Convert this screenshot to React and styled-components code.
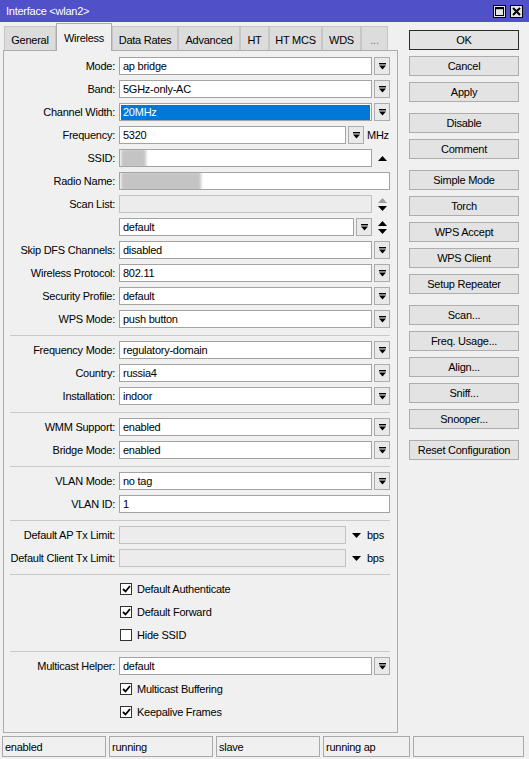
import React from 'react';
import styled, { createGlobalStyle } from 'styled-components';

const Global = createGlobalStyle`
  html, body { margin: 0; padding: 0; background: #f0f0f0; }
  body {
    font-family: "Liberation Sans", Arial, sans-serif;
    font-size: 11px;
    letter-spacing: -0.25px;
    color: #000;
  }
  * { box-sizing: border-box; }
`;

const Window = styled.div`
  width: 529px;
  height: 759px;
  display: flex;
  flex-direction: column;
  background: #f0f0f0;
  overflow: hidden;
`;

const TitleBar = styled.div`
  height: 22px;
  flex: none;
  background: #5050c8;
  color: #fff;
  display: flex;
  align-items: center;
  padding: 0 6px;
  font-size: 11px;
`;

const TitleText = styled.div`
  flex: 1;
`;

const TitleButtons = styled.div`
  display: flex;
  gap: 4px;
`;

const TitleButton = styled.div`
  width: 13px;
  height: 13px;
  background: #e4e4e4;
  border: 1px solid #000;
  display: flex;
  align-items: center;
  justify-content: center;
`;

const Main = styled.div`
  flex: 1;
  min-height: 0;
  display: flex;
`;

const LeftCol = styled.div`
  width: 398px;
  flex: none;
  display: flex;
  flex-direction: column;
  padding: 1px 0 0 3px;
`;

const TabsRow = styled.div`
  height: 27px;
  flex: none;
  display: flex;
  align-items: flex-end;
  padding-left: 1px;
  position: relative;
  z-index: 1;
`;

const Tab = styled.div`
  width: ${p => p.$w}px;
  height: ${p => (p.$active ? 28 : 24)}px;
  margin-bottom: ${p => (p.$active ? -1 : 0)}px;
  padding-top: ${p => (p.$active ? 1 : 3)}px;
  background: ${p => (p.$active ? '#f0f0f0' : '#dcdcdc')};
  border: 1px solid ${p => (p.$active ? '#adadad' : '#c6c6c6')};
  border-bottom: none;
  display: flex;
  align-items: center;
  justify-content: center;
  white-space: nowrap;
  color: ${p => (p.$muted ? '#777' : '#000')};
`;

const Panel = styled.div`
  flex: 1;
  border: 1px solid #adadad;
  padding: 6px 7px 0 0;
  display: flex;
  flex-direction: column;
`;

const Row = styled.div`
  height: 18px;
  margin-bottom: 5px;
  display: flex;
  align-items: center;
  flex: none;
`;

const Label = styled.div`
  width: 111px;
  flex: none;
  text-align: right;
  white-space: nowrap;
`;

const Field = styled.div`
  flex: 1;
  min-width: 0;
  height: 100%;
  margin-left: 4px;
  display: flex;
  align-items: center;
  gap: 2px;
`;

const Input = styled.div`
  flex: 1;
  min-width: 0;
  height: 18px;
  border: 1px solid ${p => (p.$disabled ? '#c2c2c2' : '#a3a3a3')};
  background: ${p => (p.$disabled ? '#ececec' : '#fff')};
  display: flex;
  align-items: center;
  padding: ${p => (p.$selected ? '0 1px' : '0 0 0 3px')};
  overflow: hidden;
  white-space: nowrap;
`;

const Highlight = styled.span`
  flex: 1;
  height: 15px;
  background: #0078d7;
  color: #fff;
  padding-left: 2px;
  display: flex;
  align-items: center;
`;

const Blob = styled.span`
  display: inline-block;
  width: ${p => p.$w}px;
  height: 19px;
  margin-left: -2px;
  background: #c4c4c4;
  filter: blur(1.6px);
`;

const DropBtn = styled.div`
  width: 16px;
  height: 18px;
  flex: none;
  border: 1px solid #acacac;
  background: #e9e9e9;
  display: flex;
  align-items: center;
  justify-content: center;
`;

const ArrowCell = styled.div`
  width: 16px;
  height: 18px;
  flex: none;
  display: flex;
  flex-direction: column;
  align-items: center;
  justify-content: center;
  gap: 3px;
`;

const Unit = styled.div`
  width: 24px;
  flex: none;
  padding-left: 1px;
  white-space: nowrap;
`;

const Separator = styled.div`
  flex: none;
  height: 0;
  border-top: 1px solid #c9c9c9;
  margin: 2px 0 5px 6px;
`;

const CheckWrap = styled.div`
  display: flex;
  align-items: center;
  margin-left: 1px;
  gap: 5px;
`;

const Box = styled.span`
  width: 12px;
  height: 12px;
  border: 1px solid #333;
  background: #fff;
  display: inline-flex;
  align-items: center;
  justify-content: center;
`;

const RightCol = styled.div`
  width: 110px;
  flex: none;
  margin-left: 11px;
  padding-top: 8px;
  display: flex;
  flex-direction: column;
  gap: 11px;
`;

const ButtonGroup = styled.div`
  display: flex;
  flex-direction: column;
  gap: 6px;
`;

const Button = styled.div`
  height: 20px;
  background: #e3e3e3;
  border: 1px solid ${p => (p.$default ? '#2a2a2a' : '#adadad')};
  display: flex;
  align-items: center;
  justify-content: center;
  white-space: nowrap;
`;

const StatusBar = styled.div`
  height: 21px;
  flex: none;
  margin: 3px 0 2px;
  padding: 0 5px 0 2px;
  display: flex;
  gap: 3px;
`;

const StatusCell = styled.div`
  width: ${p => (p.$w ? `${p.$w}px` : 'auto')};
  flex: ${p => (p.$w ? 'none' : '1')};
  border: 1px solid #a9a9a9;
  padding-left: 2px;
  display: flex;
  align-items: center;
  white-space: nowrap;
`;

const DropIcon = () => (
  <svg width="7" height="7" viewBox="0 0 7 7">
    <rect x="0" y="0" width="7" height="1.4" fill="#000" />
    <polygon points="0,2.6 7,2.6 3.5,6.6" fill="#000" />
  </svg>
);

const Tri = ({ up, color = '#000' }) => (
  <svg width="9" height="5" viewBox="0 0 9 5">
    <polygon points={up ? '0,5 9,5 4.5,0' : '0,0 9,0 4.5,5'} fill={color} />
  </svg>
);

const CheckMark = () => (
  <svg width="9" height="8" viewBox="0 0 9 8">
    <polyline points="1,4 3.5,6.5 8,1" fill="none" stroke="#000" strokeWidth="1.8" />
  </svg>
);

const Select = ({ label, value, selected }) => (
  <Row>
    <Label>{label}</Label>
    <Field>
      <Input $selected={selected}>
        {selected ? <Highlight>{value}</Highlight> : value}
      </Input>
      <DropBtn>
        <DropIcon />
      </DropBtn>
    </Field>
  </Row>
);

const Check = ({ label, checked }) => (
  <Row>
    <Label />
    <Field>
      <CheckWrap>
        <Box>{checked && <CheckMark />}</Box>
        <span>{label}</span>
      </CheckWrap>
    </Field>
  </Row>
);

const tabs = [
  { t: 'General', w: 52 },
  { t: 'Wireless', w: 56, active: true },
  { t: 'Data Rates', w: 66 },
  { t: 'Advanced', w: 62 },
  { t: 'HT', w: 29 },
  { t: 'HT MCS', w: 53 },
  { t: 'WDS', w: 39 },
  { t: '...', w: 27, muted: true },
];

const buttonGroups = [
  ['OK', 'Cancel', 'Apply'],
  ['Disable', 'Comment'],
  ['Simple Mode', 'Torch', 'WPS Accept', 'WPS Client', 'Setup Repeater'],
  ['Scan...', 'Freq. Usage...', 'Align...', 'Sniff...', 'Snooper...'],
  ['Reset Configuration'],
];

export default function App() {
  return (
    <Window>
      <Global />
      <TitleBar>
        <TitleText>Interface &lt;wlan2&gt;</TitleText>
        <TitleButtons>
          <TitleButton>
            <svg width="9" height="9" viewBox="0 0 9 9">
              <rect x="0.5" y="0.5" width="8" height="8" fill="none" stroke="#000" strokeWidth="1" />
              <rect x="0" y="0" width="9" height="2.2" fill="#000" />
            </svg>
          </TitleButton>
          <TitleButton>
            <svg width="9" height="9" viewBox="0 0 9 9">
              <path d="M1 1 L8 8 M8 1 L1 8" stroke="#000" strokeWidth="2" />
            </svg>
          </TitleButton>
        </TitleButtons>
      </TitleBar>
      <Main>
        <LeftCol>
          <TabsRow>
            {tabs.map(t => (
              <Tab key={t.t} $w={t.w} $active={t.active} $muted={t.muted}>
                {t.t}
              </Tab>
            ))}
          </TabsRow>
          <Panel>
            <Select label="Mode:" value="ap bridge" />
            <Select label="Band:" value="5GHz-only-AC" />
            <Select label="Channel Width:" value="20MHz" selected />
            <Row>
              <Label>Frequency:</Label>
              <Field>
                <Input>5320</Input>
                <DropBtn>
                  <DropIcon />
                </DropBtn>
                <Unit>MHz</Unit>
              </Field>
            </Row>
            <Row>
              <Label>SSID:</Label>
              <Field>
                <Input>
                  <Blob $w={25} />
                </Input>
                <ArrowCell>
                  <Tri up />
                </ArrowCell>
              </Field>
            </Row>
            <Row>
              <Label>Radio Name:</Label>
              <Field>
                <Input>
                  <Blob $w={80} />
                </Input>
              </Field>
            </Row>
            <Row>
              <Label>Scan List:</Label>
              <Field>
                <Input $disabled />
                <ArrowCell>
                  <Tri up color="#a0a0a0" />
                  <Tri />
                </ArrowCell>
              </Field>
            </Row>
            <Row>
              <Label />
              <Field>
                <Input>default</Input>
                <DropBtn>
                  <DropIcon />
                </DropBtn>
                <ArrowCell>
                  <Tri up />
                  <Tri />
                </ArrowCell>
              </Field>
            </Row>
            <Select label="Skip DFS Channels:" value="disabled" />
            <Select label="Wireless Protocol:" value="802.11" />
            <Select label="Security Profile:" value="default" />
            <Select label="WPS Mode:" value="push button" />
            <Separator />
            <Select label="Frequency Mode:" value="regulatory-domain" />
            <Select label="Country:" value="russia4" />
            <Select label="Installation:" value="indoor" />
            <Separator />
            <Select label="WMM Support:" value="enabled" />
            <Select label="Bridge Mode:" value="enabled" />
            <Separator />
            <Select label="VLAN Mode:" value="no tag" />
            <Row>
              <Label>VLAN ID:</Label>
              <Field>
                <Input>1</Input>
              </Field>
            </Row>
            <Separator />
            <Row>
              <Label>Default AP Tx Limit:</Label>
              <Field>
                <Input $disabled />
                <ArrowCell>
                  <Tri />
                </ArrowCell>
                <Unit>bps</Unit>
              </Field>
            </Row>
            <Row>
              <Label>Default Client Tx Limit:</Label>
              <Field>
                <Input $disabled />
                <ArrowCell>
                  <Tri />
                </ArrowCell>
                <Unit>bps</Unit>
              </Field>
            </Row>
            <Separator />
            <Check label="Default Authenticate" checked />
            <Check label="Default Forward" checked />
            <Check label="Hide SSID" />
            <Separator />
            <Select label="Multicast Helper:" value="default" />
            <Check label="Multicast Buffering" checked />
            <Check label="Keepalive Frames" checked />
          </Panel>
        </LeftCol>
        <RightCol>
          {buttonGroups.map((g, i) => (
            <ButtonGroup key={i}>
              {g.map(b => (
                <Button key={b} $default={b === 'OK'}>
                  {b}
                </Button>
              ))}
            </ButtonGroup>
          ))}
        </RightCol>
      </Main>
      <StatusBar>
        <StatusCell $w={104}>enabled</StatusCell>
        <StatusCell $w={104}>running</StatusCell>
        <StatusCell $w={104}>slave</StatusCell>
        <StatusCell $w={87}>running ap</StatusCell>
        <StatusCell />
      </StatusBar>
    </Window>
  );
}
